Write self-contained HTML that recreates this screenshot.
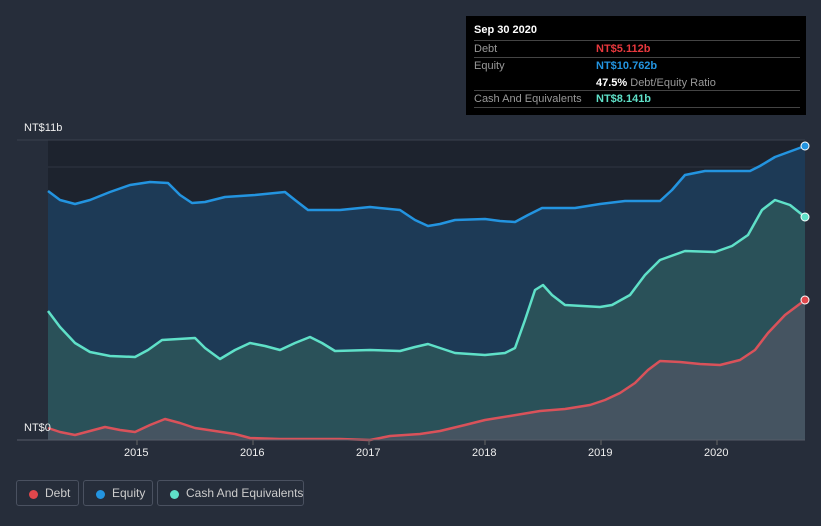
<!DOCTYPE html>
<html><head><style>
html,body{margin:0;width:821px;height:526px;overflow:hidden}
body{background:#262d3a;font-family:"Liberation Sans",sans-serif;position:relative}
.tip{position:absolute;left:466px;top:16px;width:340px;height:99px;background:#000;color:#fff;font-size:11px}
.tip .r{position:absolute;left:8px;width:326px;border-top:1px solid #444;height:16px;line-height:16px}
.lbl{color:#999}
.v{position:absolute;left:122px;font-weight:bold;white-space:nowrap}
.leg{position:absolute;top:480px;height:26px;border:1px solid #4a5160;border-radius:3px;color:#ccc;font-size:12px;line-height:24px;box-sizing:border-box;white-space:nowrap}
.leg i{position:absolute;left:12px;top:9px;width:9px;height:9px;border-radius:50%}
.leg span{position:absolute;left:28px}
.ax{position:absolute;color:#eee;font-size:11px}
</style></head><body>
<svg width="821" height="526" style="position:absolute;left:0;top:0">
<rect x="48" y="140" width="757" height="300" fill="#1d232e"/>
<line x1="17" y1="140" x2="805" y2="140" stroke="#3a414d"/>
<line x1="48" y1="167" x2="805" y2="167" stroke="#2e3542"/>
<line x1="48" y1="303" x2="805" y2="303" stroke="#2e3542"/>
<path d="M48,191 L60,200 L75,204 L90,200 L110,192 L130,185 L150,182 L168,183 L180,195 L192,203 L205,202 L225,197 L255,195 L285,192 L295,200 L308,210 L340,210 L370,207 L400,210 L415,220 L428,226 L440,224 L455,220 L485,219 L500,221 L515,222 L528,215 L542,208 L575,208 L600,204 L625,201 L660,201 L672,190 L685,175 L705,171 L750,171 L760,166 L775,157 L805,146 L805,440 L48,440Z" fill="#1d3a56"/>
<path d="M48,311 L60,327 L75,343 L90,352 L110,356 L135,357 L148,350 L162,340 L195,338 L205,348 L220,359 L235,350 L250,343 L265,346 L280,350 L295,343 L310,337 L322,343 L335,351 L370,350 L400,351 L415,347 L428,344 L440,348 L455,353 L485,355 L505,353 L515,348 L525,320 L535,290 L543,285 L552,295 L565,305 L600,307 L612,305 L630,295 L645,275 L660,260 L685,251 L715,252 L732,246 L748,235 L762,210 L775,200 L790,205 L805,217 L805,440 L48,440Z" fill="#2a5159"/>
<path d="M48,428 L60,432 L75,435 L90,431 L105,427 L120,430 L135,432 L150,425 L165,419 L180,423 L195,428 L215,431 L235,434 L250,438 L280,439 L340,439 L370,440 L390,436 L420,434 L440,431 L465,425 L485,420 L510,416 L540,411 L565,409 L590,405 L605,400 L620,393 L635,383 L648,370 L660,361 L680,362 L700,364 L720,365 L740,360 L755,350 L768,333 L785,315 L805,300 L805,440 L48,440Z" fill="#4a5563" opacity="0.85"/>
<g fill="none" stroke-width="2.5" stroke-linejoin="round">
<path d="M48,191 L60,200 L75,204 L90,200 L110,192 L130,185 L150,182 L168,183 L180,195 L192,203 L205,202 L225,197 L255,195 L285,192 L295,200 L308,210 L340,210 L370,207 L400,210 L415,220 L428,226 L440,224 L455,220 L485,219 L500,221 L515,222 L528,215 L542,208 L575,208 L600,204 L625,201 L660,201 L672,190 L685,175 L705,171 L750,171 L760,166 L775,157 L805,146" stroke="#2394e0"/>
<path d="M48,311 L60,327 L75,343 L90,352 L110,356 L135,357 L148,350 L162,340 L195,338 L205,348 L220,359 L235,350 L250,343 L265,346 L280,350 L295,343 L310,337 L322,343 L335,351 L370,350 L400,351 L415,347 L428,344 L440,348 L455,353 L485,355 L505,353 L515,348 L525,320 L535,290 L543,285 L552,295 L565,305 L600,307 L612,305 L630,295 L645,275 L660,260 L685,251 L715,252 L732,246 L748,235 L762,210 L775,200 L790,205 L805,217" stroke="#5fe0c8"/>
<path d="M48,428 L60,432 L75,435 L90,431 L105,427 L120,430 L135,432 L150,425 L165,419 L180,423 L195,428 L215,431 L235,434 L250,438 L280,439 L340,439 L370,440 L390,436 L420,434 L440,431 L465,425 L485,420 L510,416 L540,411 L565,409 L590,405 L605,400 L620,393 L635,383 L648,370 L660,361 L680,362 L700,364 L720,365 L740,360 L755,350 L768,333 L785,315 L805,300" stroke="#d9525a"/>
</g>
<line x1="17" y1="440" x2="805" y2="440" stroke="#555c68"/>
<g stroke="#666" ><line x1="137" y1="440" x2="137" y2="445"/><line x1="253" y1="440" x2="253" y2="445"/><line x1="369" y1="440" x2="369" y2="445"/><line x1="485" y1="440" x2="485" y2="445"/><line x1="601" y1="440" x2="601" y2="445"/><line x1="717" y1="440" x2="717" y2="445"/></g>
<circle cx="805" cy="146" r="4" fill="#2394e0" stroke="#fff" stroke-width="1"/>
<circle cx="805" cy="217" r="4" fill="#5fe0c8" stroke="#fff" stroke-width="1"/>
<circle cx="805" cy="300" r="4" fill="#e0474c" stroke="#fff" stroke-width="1"/>
</svg>
<div class="ax" style="left:24px;top:122px">NT$11b</div>
<div class="ax" style="left:24px;top:422px">NT$0</div>
<div class="ax" style="left:124px;top:447px">2015</div>
<div class="ax" style="left:240px;top:447px">2016</div>
<div class="ax" style="left:356px;top:447px">2017</div>
<div class="ax" style="left:472px;top:447px">2018</div>
<div class="ax" style="left:588px;top:447px">2019</div>
<div class="ax" style="left:704px;top:447px">2020</div>
<div class="tip">
<div style="position:absolute;left:8px;top:8px;font-weight:bold">Sep 30 2020</div>
<div class="r" style="top:24px"><span class="lbl">Debt</span><span class="v" style="color:#e8383d">NT$5.112b</span></div>
<div class="r" style="top:41px;height:33px"><span class="lbl">Equity</span><span class="v" style="color:#2394e0">NT$10.762b</span><span class="v" style="top:17px;color:#fff">47.5% <span style="color:#999;font-weight:normal">Debt/Equity Ratio</span></span></div>
<div class="r" style="top:74px;border-bottom:1px solid #444"><span class="lbl">Cash And Equivalents</span><span class="v" style="color:#5fe0c8">NT$8.141b</span></div>
</div>
<div class="leg" style="left:16px;width:63px"><i style="background:#e0474c"></i><span>Debt</span></div>
<div class="leg" style="left:83px;width:70px"><i style="background:#2394e0"></i><span>Equity</span></div>
<div class="leg" style="left:157px;width:147px"><i style="background:#5fe0c8"></i><span>Cash And Equivalents</span></div>
</body></html>
